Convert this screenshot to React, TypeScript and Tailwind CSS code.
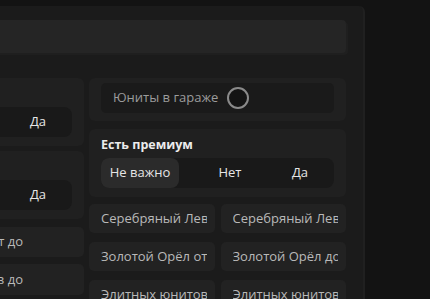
import React from "react";

const font = { fontFamily: '"Open Sans", "Noto Sans", sans-serif' };

function Segmented({ selected }: { selected: number }) {
  return (
    <div className="flex h-[30px] rounded-[8px] bg-[#191919] text-[13px] text-[#e6e6e6]">
      <div
        className={
          "flex w-[78px] shrink-0 items-center justify-center rounded-[8px] " +
          (selected === 0 ? "bg-[#2b2b2b]" : "")
        }
      >
        Не важно
      </div>
      <div className="ml-[17px] flex w-[68px] shrink-0 items-center justify-center rounded-[8px]">Нет</div>
      <div className="ml-auto flex w-[68px] shrink-0 items-center justify-center rounded-[8px]">Да</div>
    </div>
  );
}

function SegCard({ title, selected }: { title: string; selected: number }) {
  return (
    <div className="flex flex-col rounded-[6px] bg-[#202020] px-[12px] pt-[8px] pb-[9px]">
      <div className="mb-[5px] h-[16px] text-[12.5px] font-bold leading-[16px] text-[#ececec]">{title}</div>
      <Segmented selected={selected} />
    </div>
  );
}

function Cell({ text }: { text: string }) {
  return (
    <div className="flex h-[29px] items-center overflow-hidden whitespace-nowrap rounded-[5px] bg-[#222222] pl-[12px] pr-[8px] text-[13px] text-[#b9b9b9]">
      <span className="overflow-hidden">{text}</span>
    </div>
  );
}

function LeftInput({ text, tall }: { text: string; tall?: boolean }) {
  return (
    <div
      className={
        "flex items-center justify-end overflow-hidden rounded-[5px] bg-[#222222] text-[13px] text-[#b9b9b9] " +
        (tall ? "h-[31px]" : "h-[30px]")
      }
    >
      <span className="whitespace-nowrap">{text}</span>
      <span className="block h-[1px] w-[61px] shrink-0" />
    </div>
  );
}

export default function App() {
  return (
    <div className="h-[299px] w-[430px] overflow-hidden bg-[#131313]" style={font}>
      <div className="ml-[-185px] mt-[6px] w-[550px] rounded-[6px] border-r-2 border-[#202020] bg-[#1b1b1b] pl-[12px] pr-[17px] pt-[14px] pb-[20px]">
        <div className="h-[33px] rounded-[4px] bg-[#252525] shadow-[2px_2px_0_#1f1f1f]" />
        <div className="mt-[25px] flex gap-[5px]">
          {/* left column */}
          <div className="flex w-[257px] shrink-0 flex-col">
            <SegCard title="Есть техника" selected={0} />
            <div className="mt-[5px]" />
            <SegCard title="Есть события" selected={0} />
            <div className="mt-[8px]">
              <LeftInput text="Количество боёв от до" />
            </div>
            <div className="mt-[7px]">
              <LeftInput text="Количество боёв до" tall />
            </div>
          </div>
          {/* right column */}
          <div className="flex w-[257px] shrink-0 flex-col">
            <div className="rounded-[6px] bg-[#202020] px-[12px] pt-[5px] pb-[8px]">
              <div className="flex h-[30px] items-center gap-[9px] rounded-[5px] bg-[#1a1a1a] pl-[12px] text-[13px] text-[#9c9c9c]">
                <span>Юниты в гараже</span>
                <span className="h-[22px] w-[22px] rounded-full border-2 border-[#8a8a8a] bg-[#141414]" />
              </div>
            </div>
            <div className="mt-[8px]">
              <SegCard title="Есть премиум" selected={0} />
            </div>
            <div className="mt-[7px] grid grid-cols-2 gap-x-[6px] gap-y-[9px]">
              <Cell text="Серебряный Лев от" />
              <Cell text="Серебряный Лев до" />
              <Cell text="Золотой Орёл от" />
              <Cell text="Золотой Орёл до" />
              <Cell text="Элитных юнитов от" />
              <Cell text="Элитных юнитов до" />
            </div>
          </div>
        </div>
      </div>
    </div>
  );
}
